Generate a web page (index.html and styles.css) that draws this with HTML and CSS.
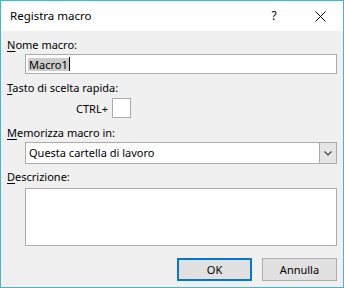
FILE: index.html
```html
<!DOCTYPE html>
<html lang="it">
<head>
    <meta charset="UTF-8">
    <title>Registra macro</title>
    <link rel="stylesheet" href="styles.css">
</head>
<body>

    <div class="dialog">
        <div class="titlebar">
            <span class="title">Registra macro</span>
            <span class="caption-btn help">?</span>
            <span class="caption-btn close">
                <svg width="11" height="11" viewBox="0 0 11 11">
                    <path d="M0.5 0.5 L10.5 10.5 M10.5 0.5 L0.5 10.5" stroke="#000" stroke-width="1" fill="none"/>
                </svg>
            </span>
        </div>

        <div class="content">
            <div class="label label-first"><u>N</u>ome macro:</div>
            <div class="field name-field"><span class="selected">Macro1</span><span class="caret"></span></div>

            <div class="label"><u>T</u>asto di scelta rapida:</div>
            <div class="shortcut">
                <span>CTRL+</span>
                <div class="field key-field"></div>
            </div>

            <div class="label label-store"><u>M</u>emorizza macro in:</div>
            <div class="field select-field">
                <span class="select-text">Questa cartella di lavoro</span>
                <span class="select-arrow">
                    <svg width="8" height="5" viewBox="0 0 8 5">
                        <path d="M0.5 0.5 L4 4 L7.5 0.5" stroke="#404040" stroke-width="1.1" fill="none"/>
                    </svg>
                </span>
            </div>

            <div class="label label-desc"><u>D</u>escrizione:</div>
            <div class="field desc-field"></div>

            <div class="buttons">
                <div class="btn btn-default">OK</div>
                <div class="btn">Annulla</div>
            </div>
        </div>
    </div>

</body>
</html>
```

FILE: styles.css
```css
body {
    margin: 0;
    padding: 0;
    font-family: 'Noto Sans', 'Open Sans', sans-serif;
    font-size: 11px;
    color: #000;
}

.dialog {
    width: 344px;
    height: 288px;
    box-sizing: border-box;
    border: 1px solid #45b7c9;
    background: #f0f0f0;
    display: flex;
    flex-direction: column;
}

.titlebar {
    height: 30px;
    background: #fff;
    display: flex;
    align-items: center;
    line-height: 30px;
}

.title {
    flex: 1;
    padding-left: 9px;
    font-size: 11.5px;
}

.caption-btn {
    width: 46px;
    height: 30px;
    display: flex;
    align-items: center;
    justify-content: center;
}

.help {
    font-size: 12px;
}

.content {
    padding: 6px 6px 0 6px;
    display: flex;
    flex-direction: column;
}

.label {
    line-height: 16px;
    margin-top: 6px;
}

.label-first {
    margin-top: 0;
}

.label-store {
    margin-top: 7px;
}

.label-desc {
    margin-top: 5px;
}

.label u {
    text-decoration-thickness: 1px;
    text-underline-offset: 2px;
}

.field {
    background: #fff;
    border: 1px solid #ababab;
    box-sizing: border-box;
    margin-left: 18px;
}

.name-field {
    margin-top: 1px;
    height: 20px;
    display: flex;
    align-items: center;
    padding-left: 2px;
}

.selected {
    background: #cccccc;
    line-height: 13px;
    padding: 0 1px;
}

.caret {
    width: 1px;
    height: 14px;
    background: #000;
}

.shortcut {
    margin-top: 2px;
    display: flex;
    align-items: center;
    padding-left: 69px;
    gap: 4px;
}

.key-field {
    margin-left: 0;
    width: 19px;
    height: 20px;
}

.select-field {
    margin-top: 1px;
    height: 22px;
    display: flex;
    align-items: stretch;
}

.select-text {
    flex: 1;
    line-height: 20px;
    padding-left: 3px;
}

.select-arrow {
    width: 16px;
    background: #e5e5e5;
    border-left: 1px solid #ababab;
    display: flex;
    align-items: center;
    justify-content: center;
}

.desc-field {
    margin-top: 3px;
    height: 58px;
}

.buttons {
    margin-top: 12px;
    display: flex;
    justify-content: flex-end;
    gap: 10px;
}

.btn {
    width: 75px;
    height: 23px;
    box-sizing: border-box;
    border: 1px solid #adadad;
    background: #e1e1e1;
    display: flex;
    align-items: center;
    justify-content: center;
}

.btn-default {
    border: 2px solid #0078d7;
}
```
